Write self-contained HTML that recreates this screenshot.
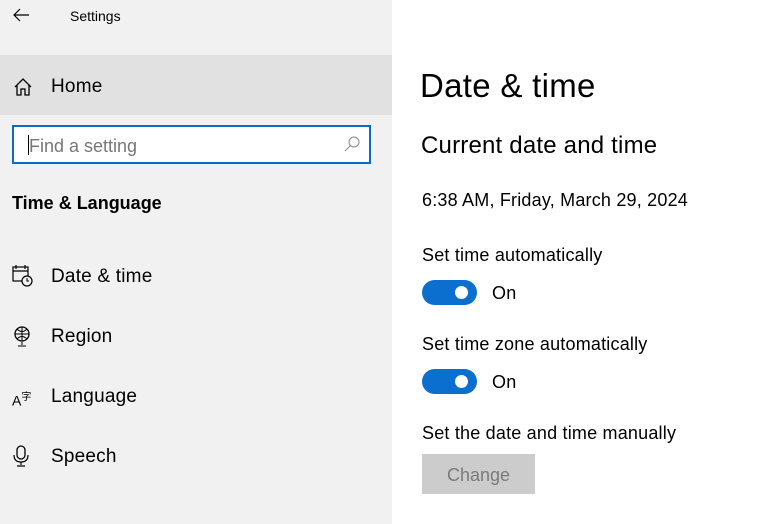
<!DOCTYPE html>
<html><head><style>
body{margin:0;width:775px;height:524px;overflow:hidden;font-family:"Liberation Sans",sans-serif;background:#fff;position:relative;color:#000}
.side{position:absolute;left:0;top:0;width:392px;height:524px;background:#f1f1f1}
.a{position:absolute;white-space:nowrap}
.home{position:absolute;left:0;top:55px;width:392px;height:60px;background:#e1e1e1}
.search{position:absolute;left:12px;top:125px;width:355px;height:35px;border:2px solid #0a6cc4;background:#fff}
.tog{position:absolute;left:422px;width:55px;height:25px;border-radius:13px;background:#0a6fcf}
.tog:after{content:"";position:absolute;right:9px;top:6px;width:13px;height:13px;border-radius:50%;background:#fff}
.nav{font-size:19px;color:#000;letter-spacing:0.2px}
.r{font-size:18px;letter-spacing:0.2px}
</style></head><body>
<div class="side"></div>
<svg class="a" style="left:12px;top:7px" width="18" height="16"><path d="M17 8H2M8 2L2 8l6 6" stroke="#000" stroke-width="1.2" fill="none"/></svg>
<div class="a" style="left:70px;top:8px;font-size:14px">Settings</div>
<div class="home"></div>
<svg class="a" style="left:13px;top:77px" width="20" height="20"><path d="M2 10L10 2l8 8M4 8v10h4v-6h4v6h4V8" stroke="#000" stroke-width="1.3" fill="none"/></svg>
<div class="a nav" style="left:51px;top:76px">Home</div>
<div class="search"><div class="a" style="left:14px;top:8px;width:1px;height:20px;background:#000"></div><div class="a" style="left:15px;top:9px;font-size:18px;color:#777">Find a setting</div>
<svg class="a" style="left:330px;top:9px" width="16" height="16"><circle cx="10" cy="6" r="5" stroke="#888" fill="none"/><path d="M6.5 9.5L1 15" stroke="#888"/></svg></div>
<div class="a" style="left:12px;top:193px;font-size:18px;font-weight:bold">Time &amp; Language</div>
<svg class="a" style="left:12px;top:265px" width="22" height="22"><rect x="1" y="2" width="15" height="14" fill="none" stroke="#000" stroke-width="1.2"/><path d="M1 6h15M4 0v4M13 0v4" stroke="#000" stroke-width="1.2"/><circle cx="15" cy="16" r="5" fill="#f1f1f1" stroke="#000" stroke-width="1.2"/><path d="M15 13v3h2" stroke="#000" fill="none"/></svg>
<div class="a nav" style="left:51px;top:266px">Date &amp; time</div>
<svg class="a" style="left:12px;top:325px" width="22" height="22"><circle cx="10" cy="9" r="7" fill="none" stroke="#000" stroke-width="1.3"/><path d="M3 9h14M10 2v14M5 4q5 5 10 0M5 14q5-5 10 0" stroke="#000" fill="none"/><path d="M10 17v3M6 21h8" stroke="#000"/></svg>
<div class="a nav" style="left:51px;top:326px">Region</div>
<div class="a" style="left:12px;top:388px;font-size:14px">A<sup style="font-size:10px;font-family:'Noto Sans CJK SC',sans-serif">字</sup></div>
<div class="a nav" style="left:51px;top:386px">Language</div>
<svg class="a" style="left:12px;top:445px" width="20" height="22"><rect x="5" y="1" width="8" height="13" rx="4" fill="none" stroke="#000" stroke-width="1.3"/><path d="M2 10q0 7 7 7q7 0 7-7M9 17v3M5 21h8" stroke="#000" fill="none" stroke-width="1.2"/></svg>
<div class="a nav" style="left:51px;top:446px">Speech</div>
<div class="a" style="left:420px;top:67px;font-size:33px;letter-spacing:0.3px">Date &amp; time</div>
<div class="a" style="left:421px;top:132px;font-size:24px;letter-spacing:0.2px">Current date and time</div>
<div class="a r" style="left:422px;top:190px">6:38 AM, Friday, March 29, 2024</div>
<div class="a r" style="left:422px;top:245px">Set time automatically</div>
<div class="tog" style="top:280px"></div>
<div class="a r" style="left:492px;top:283px">On</div>
<div class="a r" style="left:422px;top:334px">Set time zone automatically</div>
<div class="tog" style="top:369px"></div>
<div class="a r" style="left:492px;top:372px">On</div>
<div class="a r" style="left:422px;top:423px">Set the date and time manually</div>
<div class="a" style="left:422px;top:454px;width:113px;height:40px;background:#cccccc;color:#7a7a7a;font-size:18px;text-align:center;line-height:42px">Change</div>
</body></html>
